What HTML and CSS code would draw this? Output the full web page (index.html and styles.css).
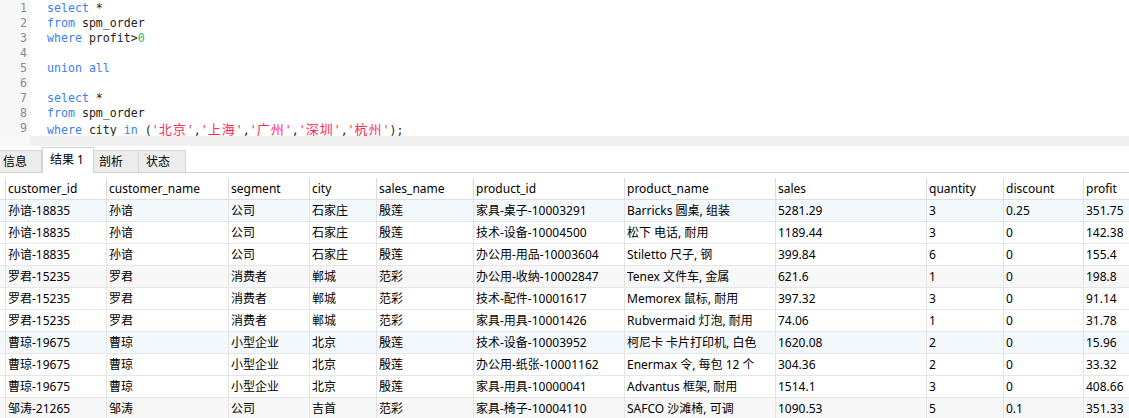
FILE: index.html
```html
<!DOCTYPE html>
<html>
<head>
<meta charset="utf-8">
<link rel="stylesheet" href="styles.css">
</head>
<body>
<div class="editor">
  <div class="gutter">
    <div class="ln">1</div><div class="ln">2</div><div class="ln">3</div><div class="ln">4</div><div class="ln">5</div><div class="ln">6</div><div class="ln">7</div><div class="ln">8</div><div class="ln">9</div>
  </div>
  <div class="code">
    <div class="cl"><span class="kw">select</span> *</div>
    <div class="cl"><span class="kw">from</span> spm_order</div>
    <div class="cl"><span class="kw">where</span> profit&gt;<span class="num">0</span></div>
    <div class="cl"></div>
    <div class="cl"><span class="kw">union</span> <span class="kw">all</span></div>
    <div class="cl"></div>
    <div class="cl"><span class="kw">select</span> *</div>
    <div class="cl"><span class="kw">from</span> spm_order</div>
    <div class="cl"><span class="kw">where</span> city <span class="kw">in</span> (<span class="str">'<span class="cjk">北京</span>'</span>,<span class="str">'<span class="cjk">上海</span>'</span>,<span class="str">'<span class="cjk">广州</span>'</span>,<span class="str">'<span class="cjk">深圳</span>'</span>,<span class="str">'<span class="cjk">杭州</span>'</span>);</div>
  </div>
</div>
<div class="strip"><div class="strip-gutter"></div><div class="strip-track"></div></div>
<div class="tabs">
  <div class="tab t1">信息</div>
  <div class="tab active t2">结果 1</div>
  <div class="tab t3">剖析</div>
  <div class="tab t4">状态</div>
</div>
<div class="grid">
  <div class="row head">
    <div class="c c0"></div><div class="c">customer_id</div><div class="c">customer_name</div><div class="c">segment</div><div class="c">city</div><div class="c">sales_name</div><div class="c">product_id</div><div class="c">product_name</div><div class="c">sales</div><div class="c">quantity</div><div class="c">discount</div><div class="c">profit</div>
  </div>
  <div class="row blue">
    <div class="c c0"></div><div class="c">孙谙-18835</div><div class="c">孙谙</div><div class="c">公司</div><div class="c">石家庄</div><div class="c">殷莲</div><div class="c">家具-桌子-10003291</div><div class="c">Barricks 圆桌, 组装</div><div class="c">5281.29</div><div class="c">3</div><div class="c">0.25</div><div class="c">351.75</div>
  </div>
  <div class="row">
    <div class="c c0"></div><div class="c">孙谙-18835</div><div class="c">孙谙</div><div class="c">公司</div><div class="c">石家庄</div><div class="c">殷莲</div><div class="c">技术-设备-10004500</div><div class="c">松下 电话, 耐用</div><div class="c">1189.44</div><div class="c">3</div><div class="c">0</div><div class="c">142.38</div>
  </div>
  <div class="row">
    <div class="c c0"></div><div class="c">孙谙-18835</div><div class="c">孙谙</div><div class="c">公司</div><div class="c">石家庄</div><div class="c">殷莲</div><div class="c">办公用-用品-10003604</div><div class="c">Stiletto 尺子, 钢</div><div class="c">399.84</div><div class="c">6</div><div class="c">0</div><div class="c">155.4</div>
  </div>
  <div class="row gray">
    <div class="c c0"></div><div class="c">罗君-15235</div><div class="c">罗君</div><div class="c">消费者</div><div class="c">郸城</div><div class="c">范彩</div><div class="c">办公用-收纳-10002847</div><div class="c">Tenex 文件车, 金属</div><div class="c">621.6</div><div class="c">1</div><div class="c">0</div><div class="c">198.8</div>
  </div>
  <div class="row">
    <div class="c c0"></div><div class="c">罗君-15235</div><div class="c">罗君</div><div class="c">消费者</div><div class="c">郸城</div><div class="c">范彩</div><div class="c">技术-配件-10001617</div><div class="c">Memorex 鼠标, 耐用</div><div class="c">397.32</div><div class="c">3</div><div class="c">0</div><div class="c">91.14</div>
  </div>
  <div class="row">
    <div class="c c0"></div><div class="c">罗君-15235</div><div class="c">罗君</div><div class="c">消费者</div><div class="c">郸城</div><div class="c">范彩</div><div class="c">家具-用具-10001426</div><div class="c">Rubvermaid 灯泡, 耐用</div><div class="c">74.06</div><div class="c">1</div><div class="c">0</div><div class="c">31.78</div>
  </div>
  <div class="row blue">
    <div class="c c0"></div><div class="c">曹琼-19675</div><div class="c">曹琼</div><div class="c">小型企业</div><div class="c">北京</div><div class="c">殷莲</div><div class="c">技术-设备-10003952</div><div class="c">柯尼卡 卡片打印机, 白色</div><div class="c">1620.08</div><div class="c">2</div><div class="c">0</div><div class="c">15.96</div>
  </div>
  <div class="row">
    <div class="c c0"></div><div class="c">曹琼-19675</div><div class="c">曹琼</div><div class="c">小型企业</div><div class="c">北京</div><div class="c">殷莲</div><div class="c">办公用-纸张-10001162</div><div class="c">Enermax 令, 每包 12 个</div><div class="c">304.36</div><div class="c">2</div><div class="c">0</div><div class="c">33.32</div>
  </div>
  <div class="row">
    <div class="c c0"></div><div class="c">曹琼-19675</div><div class="c">曹琼</div><div class="c">小型企业</div><div class="c">北京</div><div class="c">殷莲</div><div class="c">家具-用具-10000041</div><div class="c">Advantus 框架, 耐用</div><div class="c">1514.1</div><div class="c">3</div><div class="c">0</div><div class="c">408.66</div>
  </div>
  <div class="row gray">
    <div class="c c0"></div><div class="c">邹涛-21265</div><div class="c">邹涛</div><div class="c">公司</div><div class="c">吉首</div><div class="c">范彩</div><div class="c">家具-椅子-10004110</div><div class="c">SAFCO 沙滩椅, 可调</div><div class="c">1090.53</div><div class="c">5</div><div class="c">0.1</div><div class="c">351.33</div>
  </div>
</div>
</body>
</html>
```

FILE: styles.css
```css
html, body {
  margin: 0;
  padding: 0;
  background: #ffffff;
  overflow: hidden;
  width: 1129px;
  height: 418px;
}
body {
  font-family: "Noto Sans", "Noto Sans CJK SC", sans-serif;
  font-size: 12px;
  color: #000;
}
.editor {
  display: flex;
  height: 136px;
  box-sizing: border-box;
}
.gutter {
  width: 30px;
  background: #f7f7f7;
  box-sizing: border-box;
  padding-right: 3px;
  padding-top: 1px;
}
.ln {
  height: 15px;
  line-height: 15px;
  text-align: right;
  font-family: "DejaVu Sans Mono", monospace;
  font-size: 11.6px;
  color: #8c8c8c;
}
.code {
  padding-left: 17px;
  padding-top: 1px;
  flex: 1;
}
.cl {
  height: 15px;
  line-height: 15px;
  font-family: "DejaVu Sans Mono", "Noto Sans CJK SC", monospace;
  font-size: 11.6px;
  color: #222;
  white-space: pre;
}
.kw { color: #3a7ff0; }
.num { color: #10c070; }
.str { color: #ff2a55; }
.cjk {
  font-family: "Noto Sans CJK SC", sans-serif;
  font-size: 13px;
  letter-spacing: 1px;
}
.strip {
  display: flex;
  height: 10px;
}
.strip-gutter {
  width: 30px;
  background: #f8f8f8;
}
.strip-track {
  flex: 1;
  background: #f0f0f0;
}
.tabs {
  display: flex;
  align-items: flex-end;
  height: 26px;
  border-bottom: 1px solid #d2d2d2;
}
.tab {
  box-sizing: border-box;
  height: 22px;
  line-height: 21px;
  background: #ececec;
  border: 1px solid #d6d6d6;
  border-bottom: none;
  border-left: none;
  padding-left: 3px;
  font-size: 12px;
}
.tab.active {
  background: #ffffff;
  border-left: 1px solid #d2d2d2;
  border-right: 1px solid #d2d2d2;
  border-top: 1px solid #d2d2d2;
  margin-bottom: -1px;
  height: 26px;
  line-height: 24px;
  padding-left: 7px;
}
.t1 { width: 42px; }
.t2 { width: 52px; }
.t3 { width: 45px; padding-left: 5px; }
.t4 { width: 47px; padding-left: 7px; }
.grid {
  margin-top: 5px;
}
.row {
  display: grid;
  grid-template-columns: 5px 101px 122px 81px 67px 97px 151px 151px 151px 77px 80px 80px;
  height: 22px;
  box-sizing: border-box;
  border-bottom: 1px solid #e6e6e6;
}
.row.head {
  border-bottom: 1px solid #dedede;
}
.row.blue { background: #f3f8fd; }
.row.gray { background: #f7f7f7; }
.c {
  box-sizing: border-box;
  border-left: 1px solid #e4e4e4;
  padding-left: 2px;
  line-height: 21px;
  white-space: nowrap;
  overflow: hidden;
}
.head .c { border-left-color: #dcdcdc; }
.c0 { border-left: none; }
```
